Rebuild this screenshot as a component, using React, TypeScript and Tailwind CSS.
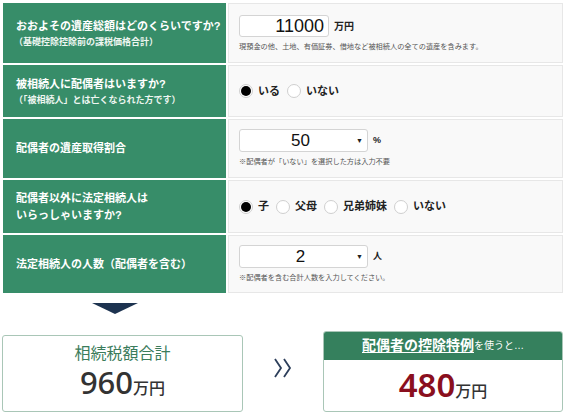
const font = { fontFamily: '"Liberation Sans", "Noto Sans CJK JP", sans-serif' };
const numFont = { fontFamily: '"Noto Sans", "Noto Sans CJK JP", sans-serif' };

function Radio({ checked, label }: { checked?: boolean; label: string }) {
  return (
    <span className="flex items-center gap-[5px] mr-[7px]">
      <span className="w-[14px] h-[14px] rounded-full border border-[#cfcfcf] bg-white flex items-center justify-center">
        {checked && <span className="w-[10px] h-[10px] rounded-full bg-black" />}
      </span>
      <span className="text-[11px] font-bold text-[#222]">{label}</span>
    </span>
  );
}

function Select({ value }: { value: string }) {
  return (
    <div className="w-[129px] h-[23px] bg-white border border-[#d4d4d4] rounded-[3px] flex items-center relative">
      <span className="flex-1 text-center text-[17px] text-[#111] pr-[6px]">{value}</span>
      <span className="absolute right-[4px] top-[6px] text-[7px] text-[#222]">▼</span>
    </div>
  );
}

const rows = [
  { h: "h-[60px]", title: ["おおよその遺産総額はどのくらいですか?"], sub: "（基礎控除控除前の課税価格合計）" },
  { h: "h-[52px]", title: ["被相続人に配偶者はいますか?"], sub: "（「被相続人」とは亡くなられた方です）" },
  { h: "h-[59px]", title: ["配偶者の遺産取得割合"] },
  { h: "h-[53px]", title: ["配偶者以外に法定相続人は", "いらっしゃいますか?"] },
  { h: "h-[58px]", title: ["法定相続人の人数（配偶者を含む）"] },
];

function RightCell({ i }: { i: number }) {
  if (i === 0)
    return (
      <div className="pl-[10px] pt-[11px]">
        <div className="flex items-center gap-[5px]">
          <div className="w-[90px] h-[22px] bg-white border border-[#d4d4d4] rounded-[3px] text-right pr-[4px] text-[18px] leading-[21px] text-[#111]">11000</div>
          <span className="text-[10px] font-bold text-[#222]">万円</span>
        </div>
        <p className="text-[7.2px] text-[#555] mt-[5px]">現預金の他、土地、有価証券、借地など被相続人の全ての遺産を含みます。</p>
      </div>
    );
  if (i === 1)
    return (
      <div className="pl-[10px] h-full flex items-center">
        <Radio checked label="いる" />
        <Radio label="いない" />
      </div>
    );
  if (i === 2 || i === 4)
    return (
      <div className="pl-[10px] pt-[9px]">
        <div className="flex items-center gap-[5px]">
          <Select value={i === 2 ? "50" : "2"} />
          <span className="text-[9px] font-bold text-[#222]">{i === 2 ? "%" : "人"}</span>
        </div>
        <p className="text-[7.2px] text-[#555] mt-[5px]">
          {i === 2 ? "※配偶者が「いない」を選択した方は入力不要" : "※配偶者を含む合計人数を入力してください。"}
        </p>
      </div>
    );
  return (
    <div className="pl-[10px] h-full flex items-center">
      <Radio checked label="子" />
      <Radio label="父母" />
      <Radio label="兄弟姉妹" />
      <Radio label="いない" />
    </div>
  );
}

export default function App() {
  return (
    <div className="w-[567px] h-[416px] bg-white overflow-hidden" style={font}>
      <div className="pt-[3px] pl-[3px] pr-[3px] flex flex-col gap-[2px]">
        {rows.map((r, i) => (
          <div key={i} className={`flex gap-[2px] ${r.h}`}>
            <div className="w-[223px] shrink-0 bg-[#378d69] flex flex-col justify-center pl-[13px] text-white">
              {r.title.map((t) => (
                <div key={t} className="text-[11px] font-bold leading-[17px] whitespace-nowrap">{t}</div>
              ))}
              {r.sub && <div className="text-[9px] font-bold leading-[13px] mt-[1px] -ml-[2px] text-[#eef6f1]">{r.sub}</div>}
            </div>
            <div className="flex-1 bg-[#f9f9f9] border border-[#e7e7e7] mr-[1px]">
              <RightCell i={i} />
            </div>
          </div>
        ))}
      </div>

      <div className="w-[223px] ml-[3px] flex justify-center pt-[10px]">
        <svg width="46" height="11" viewBox="0 0 46 11">
          <polygon points="0,0 46,0 23,11" fill="#1d3350" />
        </svg>
      </div>

      <div className="flex items-end mt-[17px] pl-[2px] pr-[4px]">
        <div className="w-[241px] h-[77px] border border-[#a9c6b7] rounded-[3px] flex flex-col items-center justify-center pt-[2px]">
          <div className="text-[16px] text-[#3b7c5b] leading-[20px]">相続税額合計</div>
          <div className="text-[#333] leading-[36px] flex items-baseline" style={numFont}>
            <span className="text-[31px] font-medium">960</span>
            <span className="text-[16px] font-medium">万円</span>
          </div>
        </div>
        <div className="w-[80px] h-[77px] flex items-center justify-center pb-[11px]">
          <svg width="18" height="20" viewBox="0 0 18 20" fill="none" stroke="#2c3e5a" strokeWidth="1.8" strokeLinejoin="miter">
            <polyline points="1,1 7,10 1,19" />
            <polyline points="10,1 16,10 10,19" />
          </svg>
        </div>
        <div className="flex-1 h-[81px] border border-[#a9c6b7] rounded-[3px] overflow-hidden flex flex-col">
          <div className="h-[31px] bg-[#35805d] flex items-center justify-center text-white">
            <span className="text-[14px] font-bold underline underline-offset-2">配偶者の控除特例</span>
            <span className="text-[10px]">を使うと…</span>
          </div>
          <div className="flex-1 flex items-center justify-center pb-[2px]">
            <div className="flex items-baseline" style={numFont}>
              <span className="text-[33px] text-[#8a0f1e] font-semibold">480</span>
              <span className="text-[16px] text-[#333] font-medium">万円</span>
            </div>
          </div>
        </div>
      </div>
    </div>
  );
}
